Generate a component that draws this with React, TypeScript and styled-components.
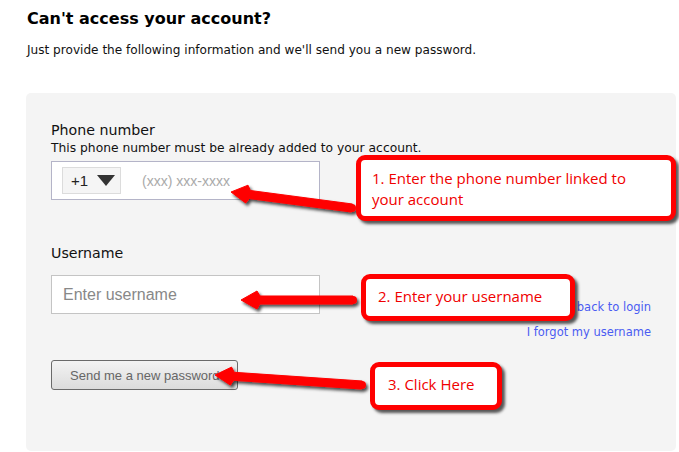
import React from 'react';
import styled, {createGlobalStyle} from 'styled-components';

const GlobalStyle = createGlobalStyle`
	html, body {
		margin: 0;
		padding: 0;
		background: #ffffff;
	}
	body {
		font-family: 'DejaVu Sans', Verdana, sans-serif;
		color: #222;
	}
`;

const Page = styled.div`
	position: relative;
	width: 679px;
	height: 452px;
	overflow: hidden;
	padding: 9px 0 0 27px;
	box-sizing: border-box;
`;

const Title = styled.h1`
	margin: 0;
	font-size: 16px;
	line-height: 20px;
	font-weight: bold;
	color: #000;
`;

const Intro = styled.p`
	margin: 13px 0 0;
	font-size: 12.1px;
	line-height: 16px;
	color: #111;
`;

const Panel = styled.div`
	margin: 35px 0 0 -1px;
	width: 650px;
	height: 358px;
	background: #f4f4f4;
	border-radius: 5px;
	padding: 27px 25px 0;
	box-sizing: border-box;
`;

const Label = styled.div`
	font-size: 14.2px;
	line-height: 20px;
	color: #111;
`;

const Hint = styled.div`
	font-size: 12.3px;
	line-height: 16px;
	color: #111;
	margin-bottom: 5px;
`;

const PhoneBox = styled.div`
	display: flex;
	align-items: center;
	width: 269px;
	height: 39px;
	box-sizing: border-box;
	border: 1px solid #b4b4c8;
	background: #fff;
	padding-left: 10px;
`;

const Country = styled.div`
	display: flex;
	align-items: center;
	justify-content: space-between;
	width: 59px;
	height: 27px;
	box-sizing: border-box;
	border: 1px solid #dcdcdc;
	background: #f5f5f5;
	padding: 0 5px 0 8px;
	font-family: 'Liberation Sans', Arial, sans-serif;
	font-size: 15px;
	color: #222;
`;

const Caret = styled.span`
	width: 0;
	height: 0;
	border-left: 9px solid transparent;
	border-right: 9px solid transparent;
	border-top: 11px solid #333;
`;

const Placeholder = styled.span<{$size: number; $color: string}>`
	font-family: 'Liberation Sans', Arial, sans-serif;
	font-size: ${(p) => p.$size}px;
	color: ${(p) => p.$color};
`;

const PhoneText = styled(Placeholder)`
	margin-left: 21px;
`;

const Section = styled.div`
	margin-top: 43px;
`;

const UserRow = styled.div`
	display: flex;
	justify-content: space-between;
	margin-top: 12px;
`;

const TextBox = styled.div`
	display: flex;
	align-items: center;
	width: 269px;
	height: 39px;
	box-sizing: border-box;
	border: 1px solid #c4c4c4;
	background: #fff;
	padding-left: 11px;
`;

const Links = styled.div`
	display: flex;
	flex-direction: column;
	align-items: flex-end;
	gap: 8px;
	padding-top: 24px;
`;

const Link = styled.a`
	font-size: 11.5px;
	line-height: 17px;
	color: #4a5cf2;
	text-decoration: none;
`;

const SendButton = styled.button`
	display: block;
	margin-top: 19px;
	width: 187px;
	height: 30px;
	border: 1px solid #6a6a6a;
	border-radius: 3px;
	background: linear-gradient(#f3f3f3, #dcdcdc);
	font-family: 'Liberation Sans', Arial, sans-serif;
	font-size: 13px;
	color: #666;
	padding: 0 0 0 18px;
	text-align: left;
	white-space: nowrap;
	overflow: hidden;
`;

const Callout = styled.div<{$x: number; $y: number; $w: number; $h: number}>`
	position: absolute;
	left: ${(p) => p.$x}px;
	top: ${(p) => p.$y}px;
	width: ${(p) => p.$w}px;
	height: ${(p) => p.$h}px;
	box-sizing: border-box;
	border: 5px solid #ff0000;
	border-radius: 9px;
	background: #fff;
	box-shadow: 3px 3px 3px rgba(0, 0, 0, 0.65);
	padding: 8px 12px 0 11px;
	font-family: 'Open Sans', 'Noto Sans', sans-serif;
	font-size: 15px;
	line-height: 21px;
	color: #f00000;
	white-space: nowrap;
`;

const Overlay = styled.svg`
	position: absolute;
	left: 0;
	top: 0;
	pointer-events: none;
`;

type Arrow = {tip: [number, number]; tail: [number, number]};

const arrows: Arrow[] = [
	{tip: [231, 192], tail: [352, 208]},
	{tip: [241, 300], tail: [353, 300]},
	{tip: [215, 375], tail: [362, 385]},
];

const arrowPoints = ({tip, tail}: Arrow) => {
	const [tx, ty] = tip;
	const [ex, ey] = tail;
	const len = Math.hypot(ex - tx, ey - ty);
	const ux = (ex - tx) / len;
	const uy = (ey - ty) / len;
	const nx = -uy;
	const ny = ux;
	const head = 19;
	const hw = 9;
	const sw = 4;
	const bx = tx + ux * head;
	const by = ty + uy * head;
	const pts = [
		[tx, ty],
		[bx + nx * hw - ux * 3, by + ny * hw - uy * 3],
		[bx + nx * sw, by + ny * sw],
		[ex + nx * sw, ey + ny * sw],
		[ex - nx * sw, ey - ny * sw],
		[bx - nx * sw, by - ny * sw],
		[bx - nx * hw - ux * 3, by - ny * hw - uy * 3],
	];
	return pts.map((p) => p.map((v) => v.toFixed(1)).join(',')).join(' ');
};

const Arrows = () => (
	<Overlay width="679" height="452" viewBox="0 0 679 452">
		<defs>
			<filter id="sh" x="-10%" y="-50%" width="130%" height="200%">
				<feDropShadow dx="2" dy="2.5" stdDeviation="1.4" floodColor="#000" floodOpacity="0.7" />
			</filter>
		</defs>
		{arrows.map((a, i) => (
			<g key={i} filter="url(#sh)">
				<polygon points={arrowPoints(a)} fill="#ff0000" strokeLinejoin="round" stroke="#ff0000" strokeWidth="1" />
				<circle cx={a.tail[0]} cy={a.tail[1]} r="4" fill="#ff0000" />
			</g>
		))}
	</Overlay>
);

const App = () => {
	return (
		<Page>
			<GlobalStyle />
			<Title>Can't access your account?</Title>
			<Intro>Just provide the following information and we'll send you a new password.</Intro>
			<Panel>
				<Label>Phone number</Label>
				<Hint>This phone number must be already added to your account.</Hint>
				<PhoneBox>
					<Country>
						+1
						<Caret />
					</Country>
					<PhoneText $size={14} $color="#aaaaaa">
						(xxx) xxx-xxxx
					</PhoneText>
				</PhoneBox>
				<Section>
					<Label>Username</Label>
					<UserRow>
						<TextBox>
							<Placeholder $size={16} $color="#888888">
								Enter username
							</Placeholder>
						</TextBox>
						<Links>
							<Link href="#">back to login</Link>
							<Link href="#">I forgot my username</Link>
						</Links>
					</UserRow>
				</Section>
				<SendButton>Send me a new password</SendButton>
			</Panel>
			<Arrows />
			<Callout $x={356} $y={155} $w={320} $h={66}>
				1. Enter the phone number linked to
				<br />
				your account
			</Callout>
			<Callout $x={361} $y={274} $w={214} $h={47} style={{paddingTop: 7, paddingLeft: 12}}>
				2. Enter your username
			</Callout>
			<Callout $x={370} $y={362} $w={132} $h={48} style={{paddingTop: 7, paddingLeft: 13}}>
				3. Click Here
			</Callout>
		</Page>
	);
};

export default App;
